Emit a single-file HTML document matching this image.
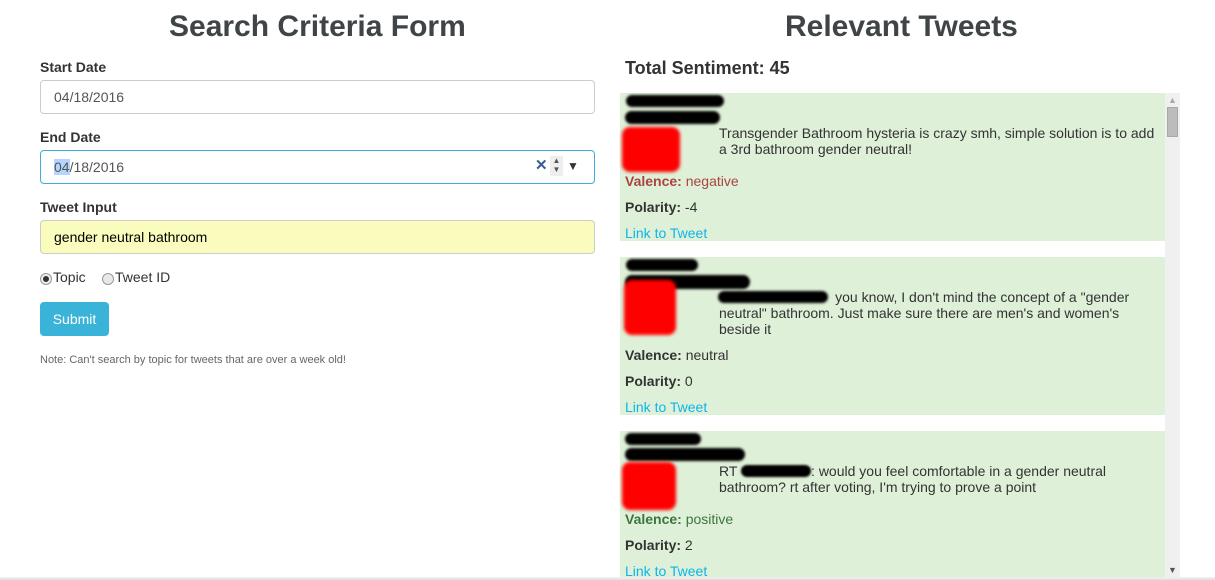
<!DOCTYPE html>
<html><head><meta charset="utf-8"><style>
*{box-sizing:border-box;margin:0;padding:0}
body{width:1215px;height:580px;overflow:hidden;background:#fff;font-family:"Liberation Sans",Arial,sans-serif;color:#333;position:relative;font-size:14px}
.a{position:absolute}
h1{position:absolute;font-size:30px;font-weight:bold;color:#3f4447;white-space:nowrap}
.lbl{position:absolute;left:40px;font-weight:bold;font-size:14px;color:#333}
.inp{position:absolute;left:40px;width:555px;height:34px;border:1px solid #ccc;border-radius:4px;padding:8px 13px;font-size:14px;color:#555;line-height:16px}
.card{position:absolute;left:620px;width:545px;background:#dff0d8}
.blk{position:absolute;background:#000;border-radius:7px;filter:blur(1.2px)}
.red{position:absolute;background:#f00;border-radius:8px;filter:blur(1.5px)}
.t{position:absolute;left:719px;width:440px;line-height:16px;font-size:14px;color:#333}
.v{position:absolute;left:625px;font-size:14px}
.lnk{position:absolute;left:625px;color:#0fb5e8;font-size:14px}
</style></head><body>
<h1 style="left:169px;top:10px">Search Criteria Form</h1>
<h1 style="left:785px;top:10px">Relevant Tweets</h1>

<div class="lbl" style="top:59px">Start Date</div>
<div class="inp" style="top:80px">04/18/2016</div>
<div class="lbl" style="top:129px">End Date</div>
<div class="inp" style="top:150px;border-color:#3ab0d9"><span style="background:#b4d5fe">04</span>/18/2016
<span class="a" style="left:494px;top:7px;color:#3a5b94;font-weight:bold;font-size:15px">✕</span>
<span class="a" style="left:509px;top:5px;width:13px;height:20px;background:#eee;font-size:8px;line-height:9px;text-align:center;color:#555">▲<br>▼</span>
<span class="a" style="left:526px;top:7px;font-size:12px;color:#333">▼</span></div>
<div class="lbl" style="top:199px">Tweet Input</div>
<div class="inp" style="top:220px;background:#fafcbd;color:#000">gender neutral bathroom</div>
<div class="a" style="left:40px;top:273px;width:12px;height:12px;border:1px solid #999;border-radius:50%;background:#eee"><span class="a" style="left:2px;top:2px;width:6px;height:6px;border-radius:50%;background:#333"></span></div>
<div class="a" style="left:53px;top:269px">Topic</div>
<div class="a" style="left:102px;top:273px;width:12px;height:12px;border:1px solid #999;border-radius:50%;background:#e8e8e8"></div>
<div class="a" style="left:115px;top:269px">Tweet ID</div>
<div class="a" style="left:40px;top:302px;width:69px;height:34px;background:#39b3d7;border-radius:4px;color:#fff;font-size:14px;line-height:34px;text-align:center">Submit</div>
<div class="a" style="left:40px;top:354px;font-size:11px;color:#666">Note: Can't search by topic for tweets that are over a week old!</div>

<div class="a" style="left:625px;top:58px;font-size:18px;font-weight:bold;color:#333">Total Sentiment: 45</div>

<div class="card" style="top:93px;height:148px"></div>
<div class="card" style="top:257px;height:158px"></div>
<div class="card" style="top:431px;height:149px"></div>

<div class="blk" style="left:626px;top:95px;width:98px;height:12px"></div>
<div class="blk" style="left:625px;top:111px;width:95px;height:13px"></div>
<div class="red" style="left:622px;top:127px;width:58px;height:45px"></div>
<div class="t" style="top:125px">Transgender Bathroom hysteria is crazy smh, simple solution is to add a 3rd bathroom gender neutral!</div>
<div class="v" style="top:173px;color:#a94442"><b>Valence:</b> negative</div>
<div class="v" style="top:199px"><b>Polarity:</b> -4</div>
<div class="lnk" style="top:225px">Link to Tweet</div>

<div class="blk" style="left:626px;top:259px;width:72px;height:12px"></div>
<div class="blk" style="left:625px;top:275px;width:125px;height:14px"></div>
<div class="blk" style="left:718px;top:291px;width:110px;height:12px"></div>
<div class="red" style="left:624px;top:280px;width:52px;height:55px"></div>
<div class="t" style="top:289px"><span style="visibility:hidden">@xxxxxxxxxxxxxx</span> you know, I don't mind the concept of a "gender neutral" bathroom. Just make sure there are men's and women's beside it</div>
<div class="v" style="top:347px"><b>Valence:</b> neutral</div>
<div class="v" style="top:373px"><b>Polarity:</b> 0</div>
<div class="lnk" style="top:399px">Link to Tweet</div>

<div class="blk" style="left:625px;top:433px;width:76px;height:12px"></div>
<div class="blk" style="left:625px;top:448px;width:120px;height:13px"></div>
<div class="red" style="left:622px;top:462px;width:54px;height:48px"></div>
<div class="t" style="top:463px">RT <span style="display:inline-block;width:70px;height:12px;background:#000;border-radius:6px;vertical-align:-1px;filter:blur(1px)"></span>: would you feel comfortable in a gender neutral bathroom? rt after voting, I'm trying to prove a point</div>
<div class="v" style="top:511px;color:#3c763d"><b>Valence:</b> positive</div>
<div class="v" style="top:537px"><b>Polarity:</b> 2</div>
<div class="lnk" style="top:563px">Link to Tweet</div>

<div class="a" style="left:1165px;top:93px;width:15px;height:485px;background:#f0f0f0"></div>
<div class="a" style="left:1168px;top:95px;font-size:9px;color:#aaa">▲</div>
<div class="a" style="left:1167px;top:107px;width:11px;height:30px;background:#bcbcbc;border:1px solid #a8a8a8"></div>
<div class="a" style="left:1168px;top:565px;font-size:9px;color:#555">▼</div>
<div class="a" style="left:0;top:577px;width:1215px;height:3px;background:linear-gradient(#f4f4f4,#ddd)"></div>
</body></html>
